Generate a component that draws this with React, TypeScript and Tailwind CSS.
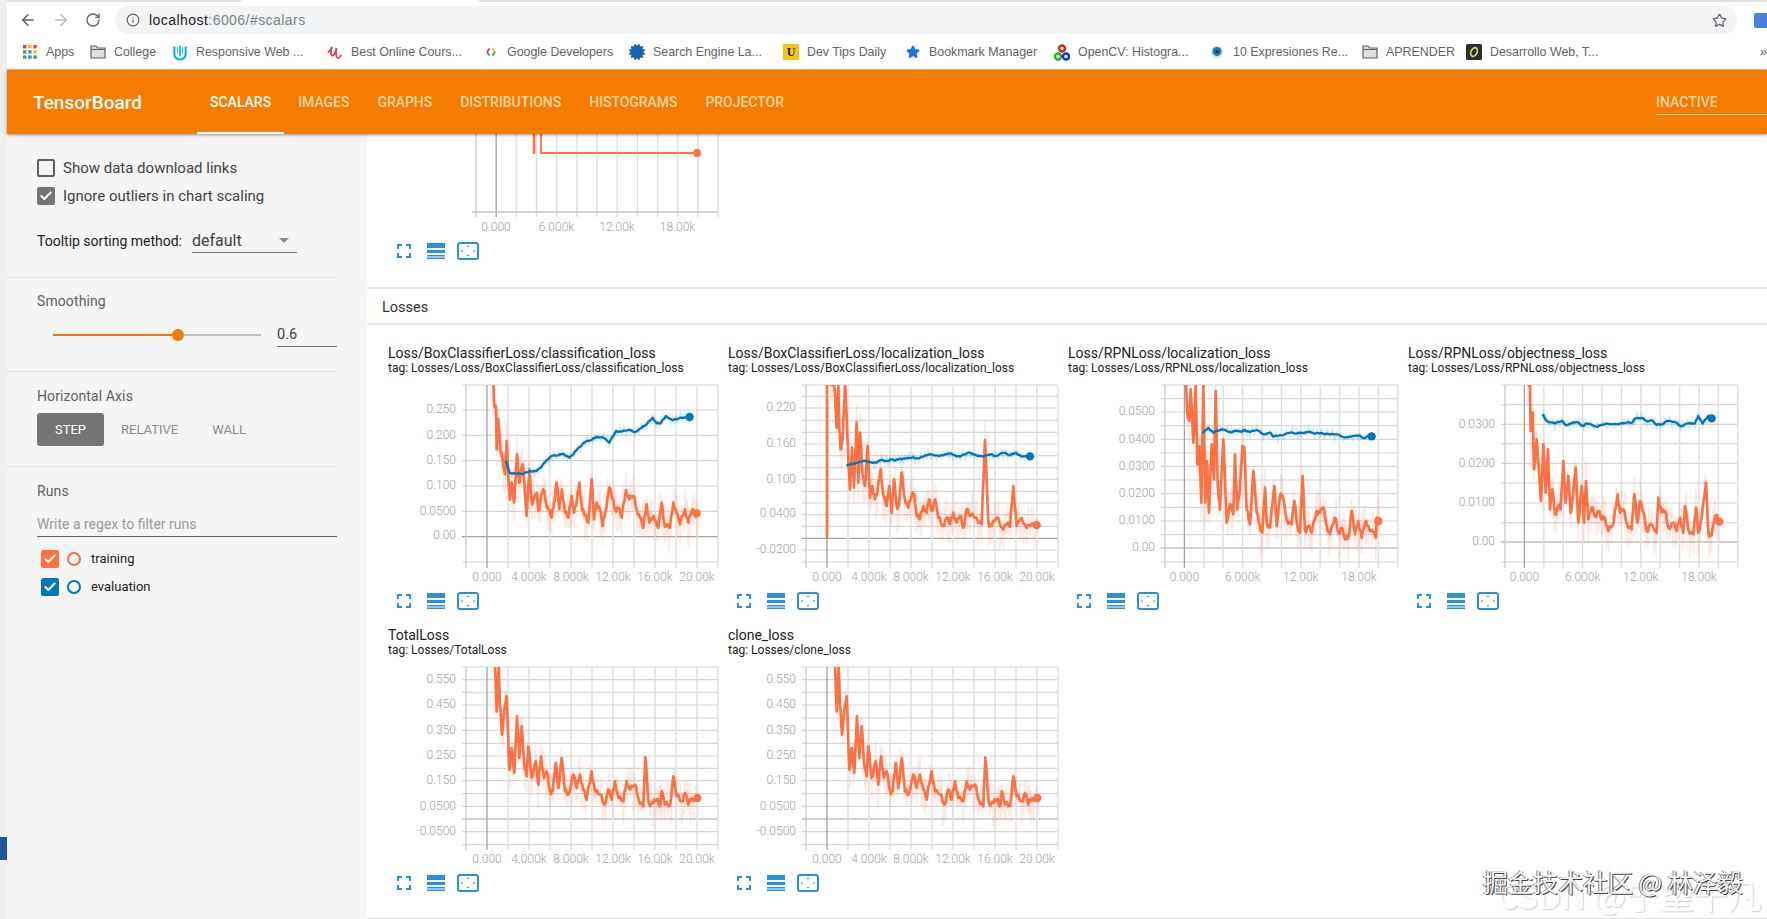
import { ArrowLeft, ArrowRight, Check, Info, RotateCw, Star } from "lucide-react";
import { FaCertificate } from "react-icons/fa";

const ORANGE = "#ff7043";
const BLUE = "#0077bb";

type Chart = {
  id: string;
  title: string;
  tag: string;
  left: number;
  step: number;
  every: number;
  labelX: number;
  dx: number;
  top: number;
  xLabels: string[];
  gridY: number[];
  zeroY: number;
  yLabels: [string, number][];
  orange: string;
  dotO: [number, number];
  blue?: string;
  dotB?: [number, number];
};

const totalCurve =
  "375,137 380,270 386,137 390,250 396,340 402,275 410,225 418,445 425,380 433,455 441,285 448,410 455,315 462,420 470,465 475,375 485,470 497,420 505,490 513,405 522,470 530,450 540,510 548,510 557,425 565,500 575,410 585,510 595,520 610,460 620,500 630,460 640,505 650,535 665,450 675,510 690,520 703,550 715,505 725,535 735,480 745,530 760,540 770,480 780,505 795,490 805,530 820,555 826,408 836,545 850,545 860,535 870,555 875,510 885,550 900,553 910,465 920,525 935,540 945,515 955,550 965,530 985,530";

const xEven = ["0.000", "4.000k", "8.000k", "12.00k", "16.00k", "20.00k"];
const xThird = ["0.000", "6.000k", "12.00k", "18.00k"];
const totalGrid = [137, 175, 213, 251, 290, 327, 366, 404, 441, 478, 517, 555, 593, 631, 670];
const totalLabels: [string, number][] = [
  ["0.550", 175],
  ["0.450", 251],
  ["0.350", 327],
  ["0.250", 404],
  ["0.150", 478],
  ["0.0500", 555],
  ["-0.0500", 631],
];

const charts: Chart[] = [
  {
    id: "c1",
    title: "Loss/BoxClassifierLoss/classification_loss",
    tag: "tag: Losses/Loss/BoxClassifierLoss/classification_loss",
    left: 78,
    step: 21,
    every: 2,
    labelX: 68,
    dx: -18,
    top: 147,
    xLabels: xEven,
    gridY: [147, 222, 298, 374, 450, 526, 602, 678],
    zeroY: 602,
    yLabels: [
      ["0.250", 222],
      ["0.200", 298],
      ["0.150", 374],
      ["0.100", 450],
      ["0.0500", 526],
      ["0.00", 600],
    ],
    orange:
      "370,147 372,200 378,215 380,340 385,250 388,290 392,350 398,370 405,415 410,315 415,420 420,490 425,440 432,500 436,440 441,355 447,440 452,410 458,385 463,440 470,540 478,400 485,500 492,490 500,470 505,525 512,490 520,460 528,500 535,520 545,545 552,500 560,440 568,520 576,460 585,530 595,545 605,480 612,530 620,500 628,440 636,520 645,540 655,560 665,430 672,550 680,500 690,520 698,570 705,530 718,455 728,490 735,520 745,515 755,545 768,462 778,490 790,480 800,520 810,545 820,575 830,505 838,560 848,545 858,555 865,575 875,500 882,560 890,570 900,575 910,500 920,530 930,565 945,520 955,560 965,525 975,535 985,532",
    dotO: [980, 532],
    blue: "408,375 418,410 440,413 460,414 480,405 500,405 515,392 530,372 545,360 565,358 580,353 598,365 610,355 625,335 645,318 665,312 680,302 700,305 718,320 738,285 755,287 775,282 795,288 815,275 830,265 848,245 860,262 872,262 888,240 908,253 925,248 945,244 958,243",
    dotB: [959, 243],
  },
  {
    id: "c2",
    title: "Loss/BoxClassifierLoss/localization_loss",
    tag: "tag: Losses/Loss/BoxClassifierLoss/localization_loss",
    left: 78,
    step: 21,
    every: 2,
    labelX: 68,
    dx: -8,
    top: 147,
    xLabels: xEven,
    gridY: [147, 181, 216, 253, 289, 324, 359, 395, 430, 466, 501, 536, 571, 607, 642, 678],
    zeroY: 607,
    yLabels: [
      ["0.220", 216],
      ["0.160", 324],
      ["0.100", 430],
      ["0.0400", 534],
      ["-0.0200", 642],
    ],
    orange:
      "321,607 321,147 321,147 343,147 350,275 355,147 358,280 362,340 368,310 375,147 380,240 385,370 390,460 396,335 402,455 410,260 415,440 420,290 428,420 435,450 443,330 450,485 457,450 465,490 472,470 482,400 490,480 500,510 508,450 515,530 522,430 530,510 537,510 545,410 553,480 565,515 575,480 583,475 590,540 600,550 610,510 620,530 627,490 635,525 645,490 655,545 668,570 680,545 690,565 700,530 710,560 720,540 730,575 740,520 750,540 770,545 785,565 795,312 805,560 815,570 830,545 845,575 860,565 870,572 880,450 890,570 900,550 915,565 930,570 950,567",
    dotO: [950, 567],
    blue: "380,390 395,383 415,380 430,375 450,378 470,380 480,373 500,375 515,370 525,374 540,368 555,368 575,365 590,367 610,362 625,356 650,358 670,358 688,352 705,358 720,362 745,350 765,356 790,362 810,355 825,360 850,350 870,358 888,350 905,362 930,361",
    dotB: [930, 361],
  },
  {
    id: "c3",
    title: "Loss/RPNLoss/localization_loss",
    tag: "tag: Losses/Loss/RPNLoss/localization_loss",
    left: 97,
    step: 19.4,
    every: 3,
    labelX: 87,
    dx: -8,
    top: 147,
    xLabels: xThird,
    gridY: [147, 188, 228, 269, 310, 351, 391, 432, 473, 514, 555, 596, 636, 678],
    zeroY: 636,
    yLabels: [
      ["0.0500", 228],
      ["0.0400", 310],
      ["0.0300", 391],
      ["0.0200", 473],
      ["0.0100", 555],
      ["0.00", 636],
    ],
    orange:
      "378,147 381,225 388,255 392,160 400,320 407,147 412,385 418,330 424,500 430,147 436,500 441,375 447,530 455,325 462,430 467,165 473,440 480,520 490,310 500,560 510,505 520,535 525,355 532,520 540,460 547,330 553,335 560,520 570,565 580,405 590,530 600,570 607,590 615,455 620,560 630,575 643,450 650,570 660,480 668,480 680,550 695,565 703,495 712,570 720,590 728,420 735,585 745,570 755,590 770,525 780,530 790,515 800,570 810,595 825,545 835,590 845,575 855,610 865,605 875,525 885,595 895,555 905,605 915,560 925,570 940,590 948,605 950,545 958,555",
    dotO: [955, 555],
    blue: "428,292 445,275 460,290 485,280 510,288 525,285 545,287 555,282 570,288 590,282 610,295 630,290 640,302 660,298 690,290 710,293 725,290 745,288 765,293 785,291 810,295 830,295 850,303 870,303 895,298 910,306 925,300 935,301",
    dotB: [935, 301],
  },
  {
    id: "c4",
    title: "Loss/RPNLoss/objectness_loss",
    tag: "tag: Losses/Loss/RPNLoss/objectness_loss",
    left: 97,
    step: 19.4,
    every: 3,
    labelX: 87,
    dx: -8,
    top: 147,
    xLabels: xThird,
    gridY: [147, 206, 265, 323, 382, 441, 501, 560, 618, 678],
    zeroY: 618,
    yLabels: [
      ["0.0300", 265],
      ["0.0200", 382],
      ["0.0100", 501],
      ["0.00", 618],
    ],
    orange:
      "382,147 390,147 392,285 398,230 402,400 410,310 416,395 423,495 430,325 437,470 444,340 450,520 457,460 465,535 475,510 482,520 490,375 497,500 505,420 512,530 520,470 527,395 535,560 545,450 552,560 558,435 565,550 575,515 585,540 595,525 605,550 615,545 625,585 640,565 653,475 660,530 670,520 680,560 695,580 703,475 712,560 720,495 730,530 740,585 750,565 770,590 775,485 785,530 795,525 805,575 820,560 830,585 840,545 850,590 855,510 865,580 880,595 888,515 895,590 905,545 918,440 925,590 935,598 945,540 960,558",
    dotO: [958, 557],
    blue: "427,235 440,255 465,262 485,255 497,267 515,262 530,258 548,270 560,262 592,273 620,262 655,265 680,260 695,260 705,248 725,246 740,255 755,253 770,267 785,265 800,255 825,258 842,271 860,263 885,262 895,240 908,262 925,240 935,247",
    dotB: [935, 247],
  },
  {
    id: "c5",
    title: "TotalLoss",
    tag: "tag: Losses/TotalLoss",
    left: 78,
    step: 21,
    every: 2,
    labelX: 68,
    dx: -18,
    top: 137,
    xLabels: xEven,
    gridY: totalGrid,
    zeroY: 593,
    yLabels: totalLabels,
    orange: totalCurve,
    dotO: [982, 530],
  },
  {
    id: "c6",
    title: "clone_loss",
    tag: "tag: Losses/clone_loss",
    left: 78,
    step: 21,
    every: 2,
    labelX: 68,
    dx: -18,
    top: 137,
    xLabels: xEven,
    gridY: totalGrid,
    zeroY: 593,
    yLabels: totalLabels,
    orange: totalCurve,
    dotO: [982, 530],
  },
];

// the traced points are sparse, so add jitter between them and a faint raw series behind
const spikes = [1, -0.6, 0.8, -1, 0.5, -0.9, 1.2, -0.4];
const wobble = [0.7, -1, 0.3, -0.5, 1, -0.2, 0.6, -0.8, 0.1];

function dense(points: string, jitter: number) {
  const pts = points.split(" ").map((p) => p.split(",").map(Number));
  const out: string[] = [];
  pts.forEach(([x, y], i) => {
    out.push(`${x},${y}`);
    const next = pts[i + 1];
    if (!next) return;
    for (let k = 1; k < 3; k++) {
      const nx = x + ((next[0] - x) * k) / 3;
      const ny = y + ((next[1] - y) * k) / 3 + wobble[(i * 3 + k) % wobble.length] * jitter;
      out.push(`${nx},${ny}`);
    }
  });
  return out.join(" ");
}

function raw(points: string, amp: number) {
  return points
    .split(" ")
    .map((p, i) => {
      const [x, y] = p.split(",").map(Number);
      return `${x},${y + spikes[i % spikes.length] * amp}`;
    })
    .join(" ");
}

function VGrid({ left, step, y1, y2 }: { left: number; step: number; y1: number; y2: number }) {
  return (
    <>
      {Array.from({ length: 13 }).map((_, i) => {
        const x = left + i * step;
        const edge = i === 0;
        const zero = i === 1;
        return (
          <line
            key={i}
            x1={x}
            x2={x}
            y1={y1}
            y2={y2}
            stroke={zero ? "#a3a3a3" : edge ? "#c9c9c9" : "#dedede"}
            strokeWidth={zero || edge ? 1.3 : 1.4}
          />
        );
      })}
    </>
  );
}

function AxisText({ x, y, anchor, children }: { x: number; y: number; anchor: "middle" | "end"; children: string }) {
  return (
    <text
      x={x}
      y={y}
      textAnchor={anchor}
      dominantBaseline="middle"
      fontSize="12"
      fontWeight="300"
      fontFamily="Roboto, sans-serif"
      fill="#a2a2a2"
    >
      {children}
    </text>
  );
}

function Plot({ c }: { c: Chart }) {
  const toY = (z: number) => (z - c.top) / 3 + 4;
  const dy = 4 - c.top / 3;
  return (
    <svg width="332" height="206" className="block">
      <clipPath id={c.id}>
        <rect x={c.left} y={4} width={330 - c.left} height={178} />
      </clipPath>
      {c.gridY.map((z) => (
        <line
          key={z}
          x1={c.left - 4}
          x2={330}
          y1={toY(z)}
          y2={toY(z)}
          stroke={z === c.zeroY ? "#a3a3a3" : "#d6d6d6"}
          strokeWidth={1.2}
        />
      ))}
      <VGrid left={c.left} step={c.step} y1={4} y2={187} />
      <g clipPath={`url(#${c.id})`}>
        <g transform={`translate(${c.dx} ${dy}) scale(${1 / 3})`}>
          <polyline points={raw(dense(c.orange, 8), 60)} fill="none" stroke={ORANGE} strokeOpacity="0.15" strokeWidth="5" />
          {c.blue && <polyline points={raw(dense(c.blue, 3), 12)} fill="none" stroke={BLUE} strokeOpacity="0.16" strokeWidth="6" />}
          <polyline points={dense(c.orange, 9)} fill="none" stroke={ORANGE} strokeWidth="8" strokeLinejoin="round" />
          {c.blue && <polyline points={dense(c.blue, 2)} fill="none" stroke={BLUE} strokeWidth="7" strokeLinejoin="round" />}
          <circle cx={c.dotO[0]} cy={c.dotO[1]} r="12.5" fill={ORANGE} />
          {c.dotB && <circle cx={c.dotB[0]} cy={c.dotB[1]} r="12.5" fill={BLUE} />}
        </g>
      </g>
      {c.yLabels.map(([t, z]) => (
        <AxisText key={t} x={c.labelX} y={toY(z)} anchor="end">
          {t}
        </AxisText>
      ))}
      {c.xLabels.map((t, i) => (
        <AxisText key={t} x={c.left + c.step * (1 + i * c.every)} y={197} anchor="middle">
          {t}
        </AxisText>
      ))}
    </svg>
  );
}

function ChartIcons() {
  return (
    <div className="flex items-center h-[18px] pl-[9px] text-[#2b8fdf]">
      <svg width="14" height="14" viewBox="0 0 14 14" fill="none" stroke="currentColor" strokeWidth="2">
        <path d="M1 5V1h4M9 1h4v4M13 9v4H9M5 13H1V9" />
      </svg>
      <svg width="18" height="16" viewBox="0 0 18 16" fill="currentColor" className="ml-[16px]">
        <rect width="18" height="5" />
        <rect y="7" width="18" height="3" />
        <rect y="12" width="18" height="1.5" />
        <rect y="14.5" width="18" height="1.5" />
      </svg>
      <svg width="22" height="18" viewBox="0 0 22 18" className="ml-[12px]">
        <rect x="1" y="1" width="20" height="16" rx="2" fill="none" stroke="currentColor" strokeWidth="2" />
        <path d="M11 3.5l1.5 1.5h-3zM11 14.5l1.5-1.5h-3zM4 9l1.5-1.5v3zM18 9l-1.5-1.5v3z" fill="currentColor" />
      </svg>
    </div>
  );
}

function ChartCard({ c }: { c: Chart }) {
  return (
    <div className="w-[340px] h-[282px] pt-[2px]">
      <div className="text-[14px] leading-[16px] text-[#212121]">{c.title}</div>
      <div className="text-[12px] leading-[14px] text-[#212121]">{c.tag}</div>
      <div className="mt-[6px]">
        <Plot c={c} />
      </div>
      <div className="mt-[5px]">
        <ChartIcons />
      </div>
    </div>
  );
}

function PartialChart() {
  return (
    <div className="h-[153px] pl-[21px] overflow-hidden">
      <svg width="332" height="104" className="block">
        <VGrid left={88} step={20.17} y1={0} y2={83} />
        <line x1={84} x2={330} y1={78} y2={78} stroke="#c4c4c4" strokeWidth="1.5" />
        <line x1={146} x2={146} y1={0} y2={20} stroke={ORANGE} strokeWidth="2.5" />
        <polyline points="153,0 153,19 309,19" fill="none" stroke={ORANGE} strokeWidth="1.8" />
        <circle cx={309} cy={19} r="4" fill={ORANGE} />
        {["0.000", "6.000k", "12.00k", "18.00k"].map((t, i) => (
          <AxisText key={t} x={108 + i * 60.5} y={94} anchor="middle">
            {t}
          </AxisText>
        ))}
      </svg>
      <div className="mt-[4px]">
        <ChartIcons />
      </div>
    </div>
  );
}

function FolderIcon() {
  return (
    <svg width="16" height="14" viewBox="0 0 16 14">
      <path d="M1 1h5l1.5 2H15v10H1z" fill="#dcdcdc" stroke="#5f6368" strokeWidth="1.2" />
      <path d="M1 4.5h14" stroke="#5f6368" strokeWidth="1" />
    </svg>
  );
}

const bookmarks = [
  {
    w: "w-[68px]",
    label: "Apps",
    icon: (
      <svg width="14" height="14" viewBox="0 0 14 14">
        {["#ea4335", "#fbbc05", "#ea4335", "#34a853", "#4285f4", "#fbbc05", "#34a853", "#4285f4", "#34a853"].map((f, i) => (
          <rect key={i} x={(i % 3) * 5.2} y={Math.floor(i / 3) * 5.2} width="3.4" height="3.4" fill={f} />
        ))}
      </svg>
    ),
  },
  { w: "w-[82px]", label: "College", icon: <FolderIcon /> },
  {
    w: "w-[155px]",
    label: "Responsive Web ...",
    icon: (
      <svg width="17" height="17" viewBox="0 0 17 17" fill="none" stroke="#02b3e4" strokeWidth="2.2">
        <path d="M2.5 2v8a6 6 0 0 0 12 0V2" />
        <path d="M8.5 1v11" strokeWidth="1.8" />
        <path d="M6 2.5v7M11 2.5v7" strokeWidth="1" />
      </svg>
    ),
  },
  {
    w: "w-[156px]",
    label: "Best Online Cours...",
    icon: (
      <svg width="16" height="16" viewBox="0 0 16 16" fill="none" stroke="#e0475a" strokeWidth="1.9" strokeLinecap="round">
        <path d="M1.5 8C3 7 4 5 5 3c-1 3-1.5 7 0 8.5 2 .8 3.5-3 4.5-7.5-.6 3.5-.8 8.5 1 10 1 .5 2.5-1 3.5-2.5" />
      </svg>
    ),
  },
  {
    w: "w-[146px]",
    label: "Google Developers",
    icon: (
      <svg width="12" height="14" viewBox="0 0 12 14" fill="none" strokeWidth="2">
        <path d="M4.5 3.5L2 7" stroke="#ea4335" />
        <path d="M2 7l2.5 3.5" stroke="#4285f4" />
        <path d="M7.5 3.5L10 7" stroke="#fbbc05" />
        <path d="M10 7l-2.5 3.5" stroke="#34a853" />
      </svg>
    ),
  },
  { w: "w-[154px]", label: "Search Engine La...", icon: <FaCertificate size={16} color="#1565b5" /> },
  {
    w: "w-[122px]",
    label: "Dev Tips Daily",
    icon: (
      <span className="flex items-center justify-center w-[16px] h-[16px] bg-[#f5c518] text-[#222] text-[12px] font-bold font-['Liberation_Serif',serif]">
        U
      </span>
    ),
  },
  { w: "w-[149px]", label: "Bookmark Manager", icon: <Star size={14} fill="#1a73e8" stroke="#1a73e8" /> },
  {
    w: "w-[155px]",
    label: "OpenCV: Histogra...",
    icon: (
      <svg width="16" height="17" viewBox="0 0 16 17" fill="none" strokeWidth="2.4">
        <circle cx="8" cy="4.5" r="3" stroke="#e02020" />
        <circle cx="4" cy="12.5" r="3" stroke="#16b82e" />
        <circle cx="12" cy="12.5" r="3" stroke="#1c2fd8" />
      </svg>
    ),
  },
  {
    w: "w-[153px]",
    label: "10 Expresiones Re...",
    icon: (
      <svg width="14" height="16" viewBox="0 0 14 16">
        <circle cx="7" cy="8" r="6.5" fill="#dfe5e8" />
        <circle cx="7" cy="7.5" r="4.5" fill="#1f7fa8" />
        <circle cx="7" cy="7.5" r="1.8" fill="#0b3350" />
      </svg>
    ),
  },
  { w: "w-[104px]", label: "APRENDER", icon: <FolderIcon /> },
  {
    w: "w-[150px]",
    label: "Desarrollo Web, T...",
    icon: (
      <svg width="16" height="16" viewBox="0 0 16 16">
        <rect width="16" height="16" rx="1.5" fill="#2d2d2d" />
        <ellipse cx="8" cy="8" rx="3" ry="4.5" fill="none" stroke="#cfd36a" strokeWidth="1.8" transform="rotate(25 8 8)" />
      </svg>
    ),
  },
];

const tabs = ["SCALARS", "IMAGES", "GRAPHS", "DISTRIBUTIONS", "HISTOGRAMS", "PROJECTOR"];

function Box({ checked, color }: { checked?: boolean; color?: string }) {
  if (!checked) return <span className="block w-[18px] h-[18px] border-2 border-[#5f5f5f] rounded-[2px]" />;
  return (
    <span className={`flex items-center justify-center w-[18px] h-[18px] rounded-[2px] ${color}`}>
      <Check size={14} strokeWidth={3.5} color="#fff" />
    </span>
  );
}

export default function App() {
  return (
    <div className="relative flex w-[1767px] h-[919px] overflow-hidden bg-white font-['Roboto',sans-serif]">
      <div className="w-[7px] shrink-0 bg-[#eeeeee]">
        <div className="h-[837px]" />
        <div className="h-[23px] bg-[#23549e]" />
      </div>

      <div className="flex-1 flex flex-col min-w-0">
        {/* browser chrome */}
        <div className="h-[2px] bg-[#dee1e6] pl-[234px]">
          <div className="w-[238px] h-full bg-white" />
        </div>
        <div className="flex items-center h-[36px] font-['Liberation_Sans',sans-serif]">
          <ArrowLeft size={18} color="#5f6368" className="ml-[12px]" />
          <ArrowRight size={18} color="#b5b7ba" className="ml-[15px]" />
          <RotateCw size={16} color="#5f6368" className="ml-[15px]" />
          <div className="flex items-center ml-[14px] w-[1622px] h-[28px] rounded-full bg-[#f1f3f4] pl-[11px] pr-[10px]">
            <Info size={14} color="#5f6368" />
            <span className="ml-[9px] text-[14px] tracking-[0.45px] text-[#202124]">
              localhost<span className="text-[#80868b]">:6006/#scalars</span>
            </span>
            <Star size={15} color="#5f6368" className="ml-auto" />
          </div>
          <div className="ml-[17px] w-[13px] h-[15px] rounded-l-[2px] bg-[#4a7fe0]" />
        </div>
        <div className="flex items-start h-[32px] pl-[15px] pt-[5px] border-b border-[#d9bd96] font-['Liberation_Sans',sans-serif]">
          {bookmarks.map((b) => (
            <div key={b.label} className={`flex items-center h-[18px] shrink-0 ${b.w}`}>
              <span className="flex items-center justify-center shrink-0 w-[16px]">{b.icon}</span>
              <span className="ml-[8px] text-[12.4px] text-[#5f6368] whitespace-nowrap">{b.label}</span>
            </div>
          ))}
          <span className="ml-auto text-[13px] leading-[18px] text-[#5f6368]">»</span>
        </div>

        {/* app header */}
        <header className="relative z-10 flex items-stretch h-[64px] bg-[#f57c00] shadow-[0_1px_3px_rgba(0,0,0,0.4)]">
          <div className="self-center ml-[26px] w-[164px] pt-[2px] text-[19px] font-medium text-white">TensorBoard</div>
          {tabs.map((t, i) => (
            <div
              key={t}
              className={
                i === 0
                  ? "flex items-center px-[13px] pt-[2px] border-b-2 border-white text-[14px] font-medium text-white"
                  : "flex items-center px-[14px] pt-[2px] border-b-2 border-transparent text-[13.95px] font-medium text-[#fdd5a3]"
              }
            >
              {t}
            </div>
          ))}
          <div className="self-start ml-auto mt-[21px] w-[111px] h-[24px] pt-[1px] border-b border-[#fdd5a3] text-[14px] leading-[21px] font-medium text-[#fdd5a3]">
            INACTIVE
          </div>
        </header>

        <div className="flex flex-1 min-h-0">
          {/* sidebar */}
          <aside className="w-[360px] shrink-0 bg-[#f5f5f5]">
            <div className="mr-[30px] h-[144px] pl-[30px] pt-[25px] border-b border-[#e0e0e0]">
              <label className="flex items-center gap-[8px] h-[18px] text-[15px] text-[#424242]">
                <Box />
                Show data download links
              </label>
              <label className="flex items-center gap-[8px] h-[18px] mt-[10px] text-[15px] text-[#424242]">
                <Box checked color="bg-[#757575]" />
                Ignore outliers in chart scaling
              </label>
              <div className="flex items-center mt-[20px]">
                <span className="w-[155px] pt-[5px] text-[14px] text-[#212121]">Tooltip sorting method:</span>
                <div className="flex items-center justify-between w-[105px] h-[28px] pt-[4px] border-b border-[#757575] pr-[8px] text-[16px] text-[#424242]">
                  default
                  <span className="w-0 h-0 border-x-[5px] border-x-transparent border-t-[5px] border-t-[#8a8a8a]" />
                </div>
              </div>
            </div>

            <div className="mr-[30px] h-[94px] pl-[30px] pt-[13px] border-b border-[#e0e0e0]">
              <div className="text-[14px] leading-[20px] tracking-[0.1px] text-[#616161]">Smoothing</div>
              <div className="flex items-center mt-[12px] h-[24px] pl-[16px]">
                <div className="w-[119px] h-[2px] bg-[#f57c00]" />
                <div className="w-[12px] h-[12px] rounded-full bg-[#f57c00]" />
                <div className="w-[77px] h-[2px] bg-[#bdbdbd]" />
                <div className="ml-[16px] w-[60px] h-[24px] pt-[2px] border-b border-[#757575] text-[14.5px] leading-[20px] text-[#424242]">0.6</div>
              </div>
            </div>

            <div className="mr-[30px] h-[95px] pl-[30px] pt-[14px] border-b border-[#e0e0e0]">
              <div className="text-[14px] leading-[20px] tracking-[0.1px] text-[#616161]">Horizontal Axis</div>
              <div className="flex items-center mt-[7px] text-[13px]">
                <div className="flex items-center justify-center w-[67px] h-[33px] rounded-[3px] bg-[#757575] text-white">STEP</div>
                <div className="ml-[17px] text-[#8a8a8a]">RELATIVE</div>
                <div className="ml-[34px] text-[#8a8a8a]">WALL</div>
              </div>
            </div>

            <div className="mr-[30px] pl-[30px] pt-[14px]">
              <div className="text-[14px] leading-[20px] tracking-[0.1px] text-[#616161]">Runs</div>
              <div className="mt-[13px] pb-[2px] border-b border-[#616161] text-[14px] leading-[20px] text-[#9a9a9a]">
                Write a regex to filter runs
              </div>
              <div className="flex items-center mt-[13px] ml-[4px]">
                <Box checked color="bg-[#ff7043]" />
                <span className="ml-[8px] w-[14px] h-[14px] rounded-full border-2 border-[#ff7043]" />
                <span className="ml-[10px] text-[13px] leading-[16px] text-[#212121]">training</span>
              </div>
              <div className="flex items-center mt-[10px] ml-[4px]">
                <Box checked color="bg-[#0077bb]" />
                <span className="ml-[8px] w-[14px] h-[14px] rounded-full border-2 border-[#0077bb]" />
                <span className="ml-[10px] text-[13px] leading-[16px] text-[#212121]">evaluation</span>
              </div>
            </div>
          </aside>

          {/* scalars pane */}
          <main className="flex-1 min-w-0">
            <PartialChart />
            <div className="flex items-center h-[38px] pl-[15px] pt-[4px] border-y-2 border-[#e5e5e5] rounded-l-[2px] text-[14.5px] text-[#333333]">
              Losses
            </div>
            <div className="h-[594px] pl-[21px] pt-[18px] border-b border-[#e0e0e0] grid grid-cols-[repeat(4,340px)] content-start">
              {charts.map((c) => (
                <ChartCard key={c.id} c={c} />
              ))}
            </div>
          </main>
        </div>
      </div>

      {/* watermarks over the page */}
      <div className="absolute left-[1497px] top-[876px] text-[34px] leading-[38px] whitespace-nowrap text-white [text-shadow:1px_1px_1px_#d0d0d0] font-['Noto_Sans_CJK_SC',sans-serif]">
        CSDN @宁望千凡
      </div>
      <div className="absolute left-[1483px] top-[865px] text-[25px] leading-[32px] whitespace-nowrap text-[#f4f4f4] [text-shadow:1px_1px_0_#444,-1px_0_0_#777] font-['Noto_Sans_CJK_SC',sans-serif]">
        掘金技术社区 @ 林泽毅
      </div>
    </div>
  );
}
